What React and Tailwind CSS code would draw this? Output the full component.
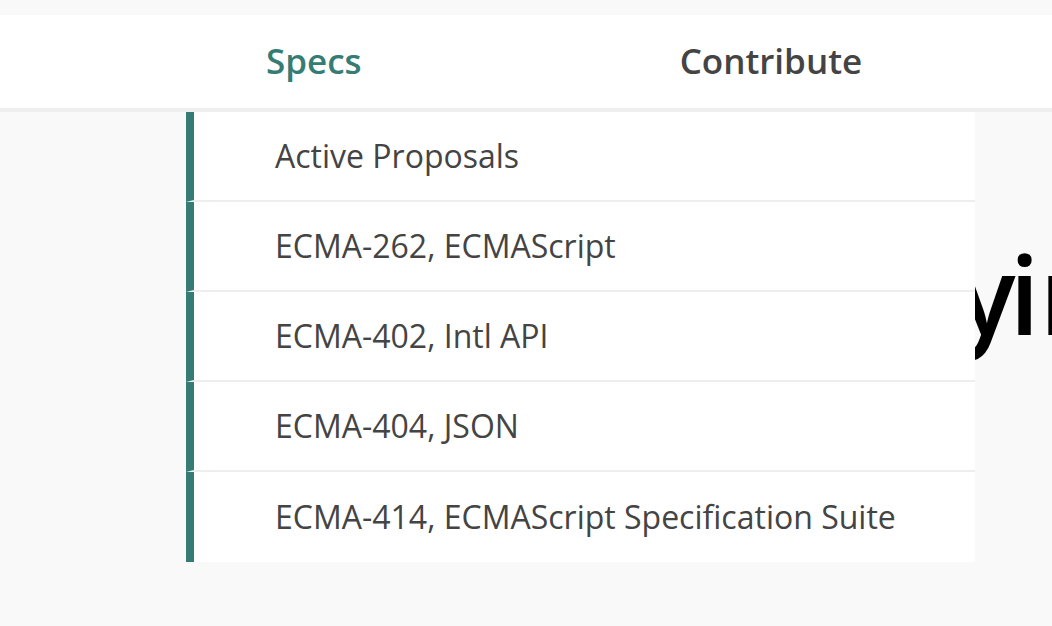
import React from "react";

const specs = [
  "Active Proposals",
  "ECMA-262, ECMAScript",
  "ECMA-402, Intl API",
  "ECMA-404, JSON",
  "ECMA-414, ECMAScript Specification Suite",
];

export default function App() {
  return (
    <div className="relative min-h-[626px] w-full overflow-hidden bg-[#f9f9f9] pt-[15px] font-['Open_Sans',sans-serif]">
      {/* Header */}
      <div className="flex h-[97px] items-center border-b-4 border-[#eeeeee] bg-white text-[35px] font-semibold">
        <span className="ml-[266px] text-[#357d74]">Specs</span>
        <span className="ml-[318px] text-[#444444]">Contribute</span>
      </div>

      {/* Page heading, partly hidden by the menu */}
      <h1 className="mt-[128px] whitespace-nowrap pl-[646px] text-[108px] font-semibold leading-none text-black">
        Specif<span className="-mr-[6px]">y</span>ing JavaScript.
      </h1>

      {/* Specs dropdown */}
      <ul className="absolute left-[186px] top-[112px] w-[789px] bg-white">
        {specs.map((s, i) => (
          <li
            key={s}
            className={
              "flex h-[90px] items-center border-l-8 border-[#357d74] pl-[81px] text-[32px] text-[#444444] " +
              (i < specs.length - 1 ? "border-b-2 border-b-[#eeeeee]" : "")
            }
          >
            {s}
          </li>
        ))}
      </ul>
    </div>
  );
}
